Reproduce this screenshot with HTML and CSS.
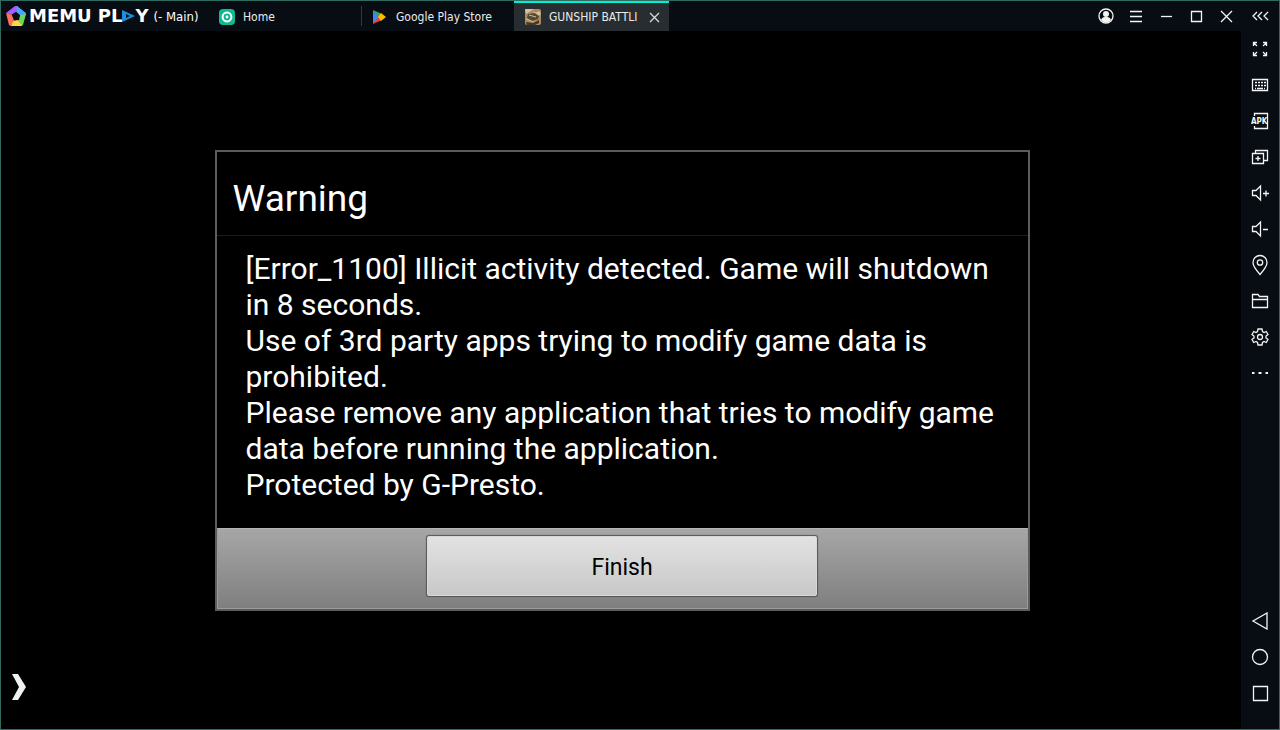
FILE: index.html
```html
<!DOCTYPE html>
<html lang="en">
<head>
    <meta charset="UTF-8">
    <meta name="viewport" content="width=device-width, initial-scale=1.0">
    <title>MEmu Play</title>
    <link rel="stylesheet" href="styles.css">
</head>
<body>
    <div class="window">
        <div class="main">
            <header class="titlebar">
                <div class="brand">
                    <svg class="brand-logo" width="22" height="22" viewBox="0 0 22 22">
                        <path fill="#a25cff" d="M1 8L10 1h3l-2 6-5 3z"/>
                        <path fill="#45a5ff" d="M12 1l9 7v2l-6 1-4-4z"/>
                        <path fill="#6fd45c" d="M21 9l-3 11-2 1-3-6 2-5z"/>
                        <path fill="#ffd545" d="M17 21H6l1-5 6-1z"/>
                        <path fill="#ff7058" d="M1 8l6 2 2 5-3 6-2-1z"/>
                        <path fill="#080c13" d="M11 7l4 3-1 5H9l-2-5z"/>
                    </svg>
                    <span class="brand-name">
                        <span>MEMU</span>
                        <span class="brand-play">PL<svg width="13" height="12" viewBox="0 0 13 12"><path fill="#1b8fe0" fill-rule="evenodd" d="M0 0l13 6-13 6zM4 4v4l4-2z"/></svg>Y</span>
                    </span>
                    <span class="brand-instance">(- Main)</span>
                </div>

                <nav class="tabs">
                    <button type="button" class="tab">
                        <svg width="16" height="16" viewBox="0 0 16 16">
                            <rect width="16" height="16" rx="4" fill="#12b893"/>
                            <circle cx="8" cy="8" r="4.4" fill="none" stroke="#fff" stroke-width="2"/>
                            <circle cx="8" cy="8" r="1.4" fill="#fff"/>
                        </svg>
                        <span class="tab-label">Home</span>
                    </button>
                    <button type="button" class="tab tab-divided">
                        <svg width="16" height="16" viewBox="0 0 16 16">
                            <path fill="#4285f4" d="M1 1v14l7-7z"/>
                            <path fill="#34a853" d="M1 1l9 4-3 4z"/>
                            <path fill="#ea4335" d="M1 15l9-4-3-4z"/>
                            <path fill="#fbbc04" d="M9 4l5 4-5 4-3-4z"/>
                        </svg>
                        <span class="tab-label">Google Play Store</span>
                    </button>
                    <div class="tab tab-active">
                        <svg width="16" height="16" viewBox="0 0 16 16">
                            <rect width="16" height="16" rx="2" fill="#a98a61"/>
                            <path fill="#d9c198" d="M0 0h9L1 5zM9 5l5-3 2 3-4 3z"/>
                            <path fill="#574833" d="M3 5l7-1 4 3-1 3-6 2-5-3z"/>
                            <path stroke="#cdbb98" d="M4 6l7 2M1 10l8 3M8 3l6 2" fill="none"/>
                            <path fill="#453825" d="M1 13l7 1 6-3v3l-4 2H2z"/>
                        </svg>
                        <span class="tab-label">GUNSHIP BATTLI</span>
                        <button type="button" class="tab-close" aria-label="Close tab">
                            <svg width="11" height="11" viewBox="0 0 11 11"><path d="M1 1l9 9M10 1l-9 9"/></svg>
                        </button>
                    </div>
                </nav>

                <div class="window-controls">
                    <button type="button" aria-label="Account">
                        <svg width="16" height="16" viewBox="0 0 16 16">
                            <circle cx="8" cy="8" r="7"/>
                            <circle class="solid" cx="8" cy="6" r="3"/>
                            <path class="solid" d="M3 12q1-3 4-3h2q3 0 4 3-5 5-10 0z"/>
                        </svg>
                    </button>
                    <button type="button" aria-label="Menu">
                        <svg width="16" height="16" viewBox="0 0 16 16"><path d="M2 3.500h12M2 8.500h12M2 13.500h12"/></svg>
                    </button>
                    <button type="button" aria-label="Minimize">
                        <svg width="16" height="16" viewBox="0 0 16 16"><path d="M3 8.500h11"/></svg>
                    </button>
                    <button type="button" aria-label="Maximize">
                        <svg width="16" height="16" viewBox="0 0 16 16"><path d="M3.500 3.500h10v10h-10z"/></svg>
                    </button>
                    <button type="button" aria-label="Close">
                        <svg width="16" height="16" viewBox="0 0 16 16"><path d="M3 3l11 11M14 3L3 14"/></svg>
                    </button>
                </div>
            </header>

            <main class="screen">
                <section class="dialog" role="alertdialog" aria-labelledby="dialogTitle" aria-describedby="dialogText">
                    <h1 class="dialog-title" id="dialogTitle">Warning</h1>
                    <p class="dialog-text" id="dialogText">[Error_1100] Illicit activity detected. Game will shutdown in 8 seconds.<br>
                    Use of 3rd party apps trying to modify game data is prohibited.<br>
                    Please remove any application that tries to modify game data before running the application.<br>
                    Protected by G-Presto.</p>
                    <div class="dialog-footer">
                        <button type="button" class="dialog-button">Finish</button>
                    </div>
                </section>

                <!-- Handle that slides the key panel out -->
                <button type="button" class="panel-handle" aria-label="Open panel">
                    <svg width="14" height="26" viewBox="0 0 14 26"><path d="M0 0h6l8 13-8 13H0l7-13z"/></svg>
                </button>
            </main>
        </div>

        <aside class="sidebar">
            <div class="tools">
                <button type="button" class="collapse" aria-label="Collapse sidebar">
                    <svg width="18" height="18" viewBox="0 0 18 18"><path d="M6 5L2 9l4 4M11 5L7 9l4 4M17 5l-4 4 4 4"/></svg>
                </button>
                <button type="button" aria-label="Full screen">
                    <svg width="18" height="18" viewBox="0 0 18 18"><path d="M6 2.500H2.500V6M2.500 2.500L6 6M12 2.500h3.500V6M15.500 2.500L12 6M2.500 12v3.500H6M2.500 15.500L6 12M12 15.500h3.500V12M15.500 15.500L12 12"/></svg>
                </button>
                <button type="button" aria-label="Key mapping">
                    <svg width="18" height="18" viewBox="0 0 18 18"><path d="M1.500 3.500h15v11h-15z"/><path stroke-dasharray="2 1" d="M4 6.500h11M4 9.500h11"/><path d="M4 12.500h1M6 12.500h6M13 12.500h1"/></svg>
                </button>
                <button type="button" aria-label="Install APK">
                    <svg width="18" height="18" viewBox="0 0 18 18"><path d="M3.500 4V1.500h13v15h-13V14"/><text class="apk" x="0" y="12">APK</text></svg>
                </button>
                <button type="button" aria-label="Multiple instances">
                    <svg width="18" height="18" viewBox="0 0 18 18"><path d="M1.500 5.500h11v10h-11zM4.500 5V2.500h12v10H13M7 8v5M4.500 10.500h5"/></svg>
                </button>
                <button type="button" aria-label="Volume up">
                    <svg width="18" height="18" viewBox="0 0 18 18"><path d="M1.500 6.500H5l4.500-4.500v14L5 11.500H1.500zM12 9.500h6M15 6.500v6"/></svg>
                </button>
                <button type="button" aria-label="Volume down">
                    <svg width="18" height="18" viewBox="0 0 18 18"><path d="M1.500 6.500H5l4.500-4.500v14L5 11.500H1.500zM12 9.500h5"/></svg>
                </button>
                <button type="button" aria-label="Location">
                    <svg width="18" height="22" viewBox="0 0 18 22"><path d="M9 20.500C5 16 2 12 2 8.500a7 7 0 0 1 14 0C16 12 13 16 9 20.500z"/><circle cx="9" cy="8.500" r="2.700"/></svg>
                </button>
                <button type="button" aria-label="Shared folder">
                    <svg width="18" height="18" viewBox="0 0 18 18"><path d="M1.500 15.500v-13H7l1.500 2h8v11zM1.500 7.500h15"/></svg>
                </button>
                <button type="button" aria-label="Settings">
                    <svg width="18" height="18" viewBox="0 0 18 18"><path d="M7 1h4l.5 2.500 1.500 1 2.300-1L17 6.500 15 8v2l2 1.500-1.700 3-2.300-1-1.500 1L11 17H7l-.5-2.500-1.500-1-2.300 1L1 11.500 3 10V8L1 6.500l1.700-3 2.300 1 1.500-1z"/><circle cx="9" cy="9" r="2.500"/></svg>
                </button>
                <button type="button" aria-label="More">
                    <svg width="18" height="18" viewBox="0 0 18 18"><path class="solid" d="M1 8h2.500v2H1zM7.500 8h3v2h-3zM14.500 8H17v2h-2.500z"/></svg>
                </button>
            </div>

            <div class="tools">
                <button type="button" aria-label="Back">
                    <svg width="18" height="18" viewBox="0 0 18 18"><path d="M16 1v16L2 9z"/></svg>
                </button>
                <button type="button" aria-label="Home">
                    <svg width="18" height="18" viewBox="0 0 18 18"><circle cx="9" cy="9" r="7.500"/></svg>
                </button>
                <button type="button" aria-label="Recent apps">
                    <svg width="18" height="18" viewBox="0 0 18 18"><path d="M2.500 2.500h14v14h-14z"/></svg>
                </button>
            </div>
        </aside>
    </div>
</body>
</html>
```

FILE: styles.css
```css
* {
    box-sizing: border-box;
}

body {
    margin: 0;
    background-color: #000;
    color: #fff;
    font-family: "DejaVu Sans Condensed", "Noto Sans", sans-serif;
    font-size: 12px;
}

button {
    padding: 0;
    border: none;
    background: none;
    color: inherit;
    font: inherit;
    cursor: pointer;
}

svg {
    display: block;
    flex: none;
}

.window {
    display: flex;
    min-height: 100vh;
    border: 1px solid #2f6b5e;
}

.main {
    display: flex;
    flex-direction: column;
    flex: 1;
    min-width: 0;
}

/* Title bar */
.titlebar {
    display: flex;
    height: 30px;
    background-color: #080c13;
}

.brand {
    display: flex;
    align-items: center;
    width: 207px;
    padding-left: 4px;
    white-space: nowrap;
}

.brand-name {
    display: flex;
    gap: 6px;
    margin-left: 2px;
    font-family: "DejaVu Sans", sans-serif;
    font-size: 18px;
    font-weight: bold;
    line-height: 20px;
}

.brand-play {
    display: flex;
    align-items: center;
}

.brand-instance {
    margin-left: 5px;
    font-size: 13px;
}

.tabs {
    display: flex;
    flex: 1;
    min-width: 0;
}

.tab {
    display: flex;
    align-items: center;
    gap: 8px;
    width: 153px;
    padding: 2px 10px 0 11px;
    color: #e8eaec;
    text-align: left;
}

.tab-label {
    min-width: 92px;
    line-height: 18px;
    white-space: nowrap;
}

.tab-divided {
    background: linear-gradient(#34383e, #34383e) left center / 1px 20px no-repeat;
}

.tab-active {
    width: 155px;
    padding-top: 0;
    border-top: 2px solid #00f0d4;
    background-color: #282d31;
}

.tab-close svg {
    fill: none;
    stroke: #d4d6d8;
    stroke-width: 1.4;
}

.window-controls {
    display: flex;
    align-items: center;
    gap: 14px;
    padding-right: 7px;
}

.window-controls svg,
.tools svg {
    fill: none;
    stroke: #f4f4f4;
    stroke-width: 1.3;
}

.window-controls .solid,
.tools .solid {
    fill: #f4f4f4;
    stroke: none;
}

/* Android screen */
.screen {
    position: relative;
    display: flex;
    flex: 1;
    align-items: center;
    justify-content: center;
    padding-left: 2px;
    background-color: #000;
    font-family: Roboto, sans-serif;
}

.panel-handle {
    position: absolute;
    bottom: 29px;
    left: 11px;
}

.panel-handle svg {
    fill: #f2f2f2;
}

.dialog {
    width: 90%;
    max-width: 815px;
    border: 2px solid #5c5c5c;
}

.dialog-title {
    margin: 0;
    padding: 25px 16px 15px;
    border-bottom: 1px solid #1c1c1c;
    font-size: 37px;
    font-weight: normal;
    line-height: 43px;
}

.dialog-text {
    margin: 0;
    padding: 15px 24px 25px 29px;
    font-size: 30px;
    line-height: 36px;
}

.dialog-footer {
    display: flex;
    justify-content: center;
    padding: 7px 16px 12px;
    border: 1px solid #9c9c9c;
    border-top-color: #b4b4b4;
    background: linear-gradient(#a6a6a6, #7f7f7f);
}

.dialog-button {
    width: 390px;
    height: 60px;
    padding-top: 3px;
    border: 1px solid #d8d8d8;
    border-radius: 2px;
    background: linear-gradient(#e2e2e2, #c8c8c8);
    box-shadow: 0 0 1px 1px #555;
    color: #000;
    font-size: 23px;
}

/* Right toolbar */
.sidebar {
    display: flex;
    flex-direction: column;
    justify-content: space-between;
    width: 38px;
    padding-bottom: 18px;
    background-color: #080c13;
}

.tools {
    display: flex;
    flex-direction: column;
}

.tools button {
    display: flex;
    align-items: center;
    justify-content: center;
    height: 36px;
}

.tools .collapse {
    height: 30px;
}

.tools .apk {
    fill: #f4f4f4;
    stroke: none;
    font-family: "DejaVu Sans Condensed", sans-serif;
    font-size: 8px;
    font-weight: bold;
}
```
